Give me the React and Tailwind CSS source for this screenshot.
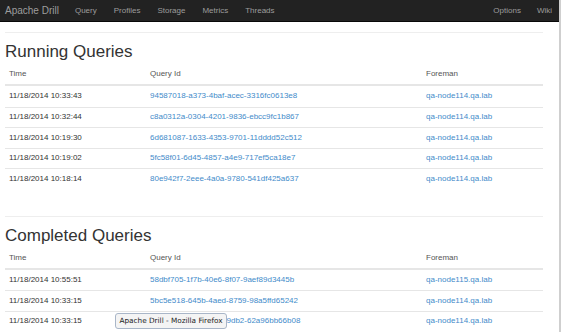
import React from 'react';

const RUNNING = [
  ['11/18/2014 10:33:43', '94587018-a373-4baf-acec-3316fc0613e8', 'qa-node114.qa.lab'],
  ['11/18/2014 10:32:44', 'c8a0312a-0304-4201-9836-ebcc9fc1b867', 'qa-node114.qa.lab'],
  ['11/18/2014 10:19:30', '6d681087-1633-4353-9701-11dddd52c512', 'qa-node114.qa.lab'],
  ['11/18/2014 10:19:02', '5fc58f01-6d45-4857-a4e9-717ef5ca18e7', 'qa-node114.qa.lab'],
  ['11/18/2014 10:18:14', '80e942f7-2eee-4a0a-9780-541df425a637', 'qa-node114.qa.lab'],
];

const COMPLETED = [
  ['11/18/2014 10:55:51', '58dbf705-1f7b-40e6-8f07-9aef89d3445b', 'qa-node115.qa.lab'],
  ['11/18/2014 10:33:15', '5bc5e518-645b-4aed-8759-98a5ffd65242', 'qa-node114.qa.lab'],
  ['11/18/2014 10:33:15', '3f2c7a1e-5d6b-4e0a-9db2-62a96bb66b08', 'qa-node114.qa.lab'],
];

const NAV = ['Query', 'Profiles', 'Storage', 'Metrics', 'Threads'];

function QueryTable({ rows }) {
  return (
    <div className="w-[538px] text-[8px] leading-[10px]">
      {/* header */}
      <div className="flex h-[22px] items-center border-b-2 border-[#e6e6e6] text-[#555]">
        <div className="w-[145px] pl-[4px]">Time</div>
        <div className="w-[276px]">Query Id</div>
        <div className="flex-1">Foreman</div>
      </div>
      {rows.map(([time, id, host], i) => (
        <div
          key={i}
          className={`flex h-[20.5px] items-center text-[#333] ${i > 0 ? 'border-t border-[#e6e6e6]' : ''}`}
        >
          <div className="w-[145px] pl-[4px]">{time}</div>
          <div className="w-[276px] text-[#428bca]">{id}</div>
          <div className="flex-1 text-[#428bca]">{host}</div>
        </div>
      ))}
    </div>
  );
}

export default function App() {
  return (
    <div
      className="relative h-[332px] w-[561px] overflow-hidden border-r-2 border-[#cfcfcf] bg-white"
      style={{ fontFamily: '"Liberation Sans", Arial, sans-serif' }}
    >
      {/* ── Navbar ─────────────────────────────── */}
      <nav className="flex h-[22px] items-center border-b border-[#080808] bg-[#222] text-[#9d9d9d]">
        <span className="ml-[5px] text-[10px]">Apache Drill</span>
        <div className="ml-[16px] flex gap-[17px] text-[8px]">
          {NAV.map((n) => (
            <span key={n}>{n}</span>
          ))}
        </div>
        <div className="ml-auto mr-[7px] flex gap-[16px] text-[8px]">
          <span>Options</span>
          <span>Wiki</span>
        </div>
      </nav>

      {/* ── Content ────────────────────────────── */}
      <main className="pl-[5px]">
        <div className="mt-[10px] w-[538px] border-t border-[#eee]" />

        <h1 className="mt-[9px] text-[17px] leading-[20px] text-[#333]">Running Queries</h1>
        <div className="mt-[2px]">
          <QueryTable rows={RUNNING} />
        </div>

        <div className="mt-[27px] w-[538px] border-t border-[#eee]" />

        <h1 className="mt-[9px] text-[17px] leading-[20px] text-[#333]">Completed Queries</h1>
        <div className="mt-[2px]">
          <QueryTable rows={COMPLETED} />
        </div>
      </main>

      {/* ── Window-title tooltip ───────────────── */}
      <div
        className="absolute left-[115px] top-[313px] flex h-[16px] w-[112px] items-center justify-center rounded-[3px] border border-[#a9b6c8] bg-[#f4f4f4] text-[7.3px] text-[#222]"
        style={{ fontFamily: '"DejaVu Sans", sans-serif' }}
      >
        Apache Drill - Mozilla Firefox
      </div>
    </div>
  );
}
